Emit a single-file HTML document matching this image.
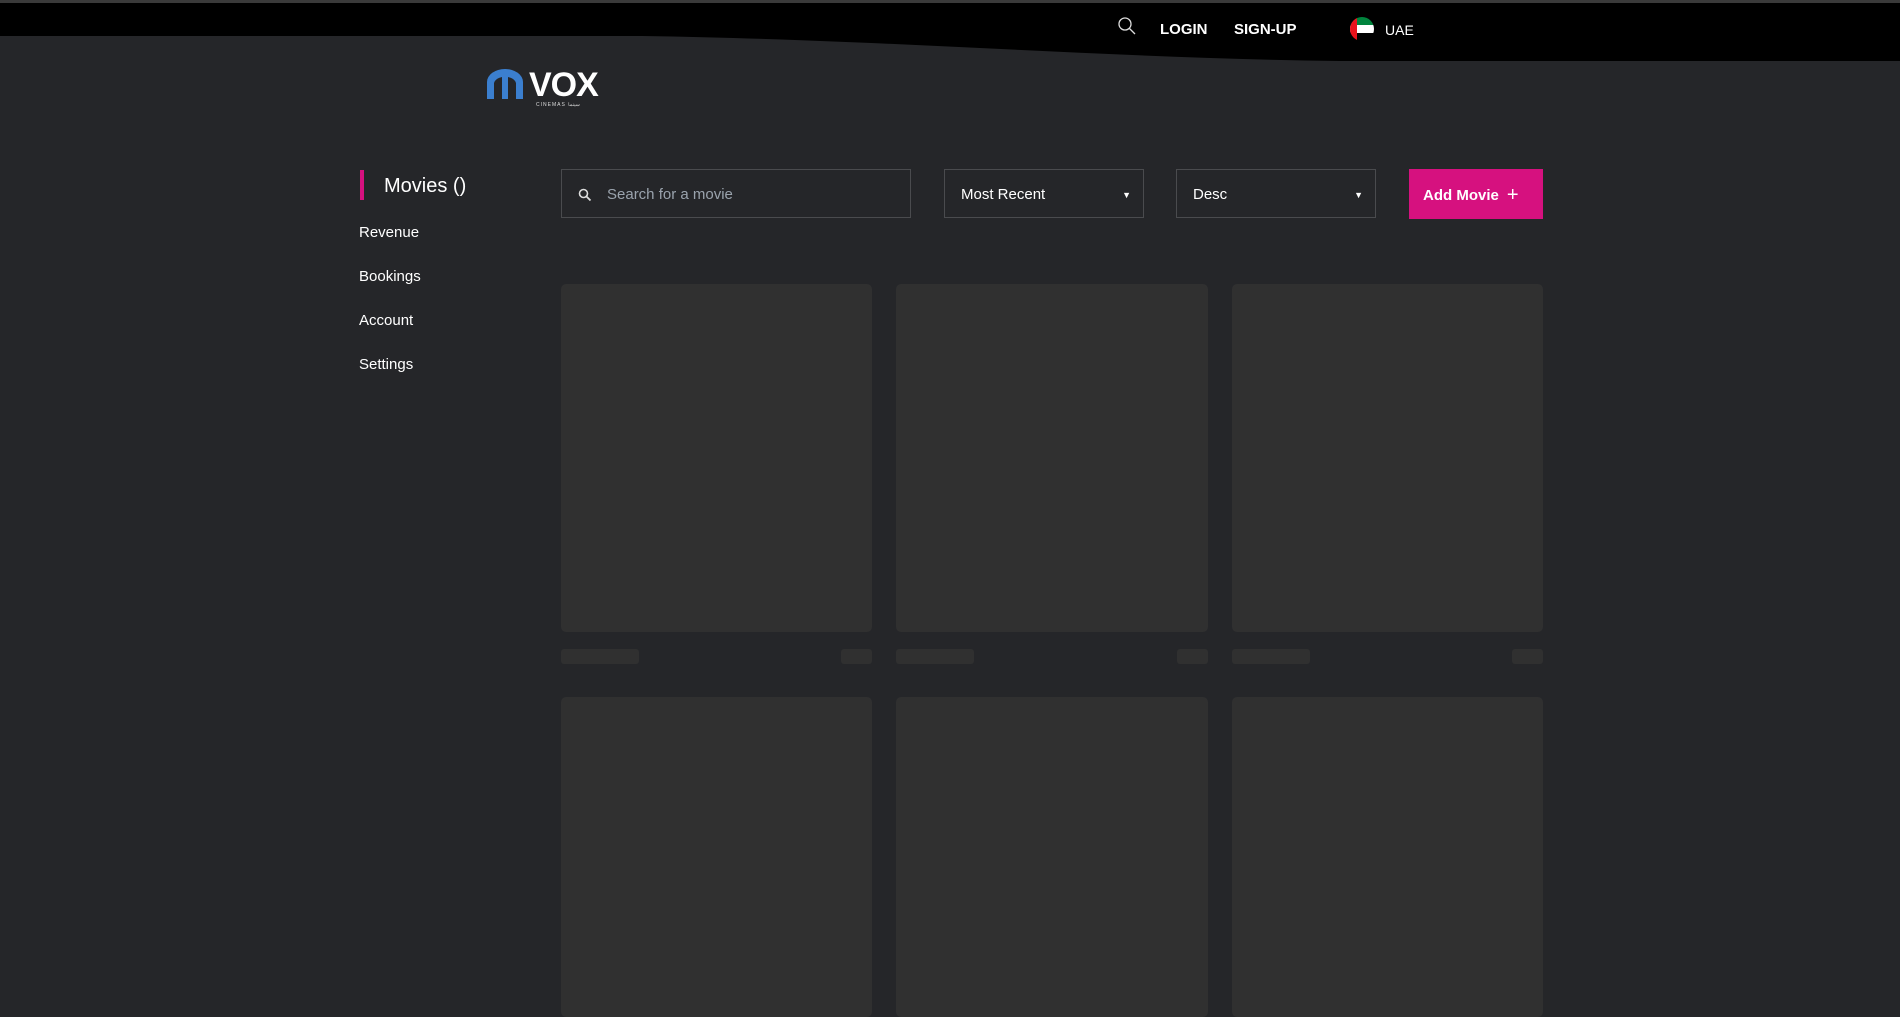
<!DOCTYPE html>
<html><head><meta charset="utf-8"><style>
*{margin:0;padding:0;box-sizing:border-box}
body{width:1900px;height:994px;overflow:hidden;background:#252629;font-family:"Liberation Sans",sans-serif;color:#fff;position:relative}
.a{position:absolute}
.nav{font-size:15px;color:#fff}
.card{position:absolute;background:#303030;border-radius:5px}
.bar{position:absolute;background:#303030;border-radius:3px;height:15px}
.box{position:absolute;border:1px solid #4a4b4e;height:49px;top:169px;font-size:15px;display:flex;align-items:center;padding-top:2px}
</style></head><body>
<svg class="a" style="left:0;top:0" width="1900" height="62">
<rect width="1900" height="3" fill="#3a3a3a"/>
<path d="M0 3 H1900 V61 H1340 C1100 58 900 40 642 36 H0 Z" fill="#000"/>
</svg>
<svg class="a" style="left:1117px;top:16px" width="20" height="20" viewBox="0 0 20 20"><circle cx="8" cy="8" r="6" fill="none" stroke="#ddd" stroke-width="1.3"/><path d="M12.5 12.5 L18 18" stroke="#ddd" stroke-width="1.3"/></svg>
<div class="a" style="left:1160px;top:21px;font-weight:bold;font-size:15px">LOGIN</div>
<div class="a" style="left:1234px;top:21px;font-weight:bold;font-size:15px">SIGN-UP</div>
<svg class="a" style="left:1350px;top:17px" width="24" height="24" viewBox="0 0 24 24"><clipPath id="c"><circle cx="12" cy="12" r="12"/></clipPath><g clip-path="url(#c)"><rect width="24" height="8" fill="#00843d"/><rect y="8" width="24" height="8" fill="#fff"/><rect y="16" width="24" height="8" fill="#000"/><rect width="7" height="24" fill="#e8121b"/></g></svg>
<div class="a" style="left:1385px;top:22px;font-size:14px">UAE</div>
<svg class="a" style="left:486px;top:68px" width="38" height="31" viewBox="0 0 38 31"><path d="M1 31 V14 A18 13 0 0 1 37 14 V31 H30 V15 A11 8 0 0 0 22 9 V31 H16 V9 A11 8 0 0 0 8 15 V31 Z" fill="#3b7fcf"/></svg>
<div class="a" style="left:529px;top:66px;font-size:34px;font-weight:900;letter-spacing:-1px">VOX</div>
<div class="a" style="left:536px;top:102px;font-size:5px;letter-spacing:1px;color:#ddd">CINEMAS سينما</div>
<div class="a" style="left:360px;top:170px;width:4px;height:30px;background:#d6117f"></div>
<div class="a" style="left:384px;top:175px;font-size:20px">Movies ()</div>
<div class="a nav" style="left:359px;top:224px">Revenue</div>
<div class="a nav" style="left:359px;top:268px">Bookings</div>
<div class="a nav" style="left:359px;top:312px">Account</div>
<div class="a nav" style="left:359px;top:356px">Settings</div>
<div class="box" style="left:561px;width:350px;color:#9aa3ad;padding-left:16px"><svg width="14" height="14" viewBox="0 0 14 14"><circle cx="5.5" cy="5.5" r="4" fill="none" stroke="#ddd" stroke-width="1.6"/><path d="M8.5 8.5L12.5 12.5" stroke="#ddd" stroke-width="1.8"/></svg><span style="margin-left:15px;font-size:15px">Search for a movie</span></div>
<div class="box" style="left:944px;width:200px;padding-left:16px">Most Recent<span style="position:absolute;right:12px;font-size:9px">▼</span></div>
<div class="box" style="left:1176px;width:200px;padding-left:16px">Desc<span style="position:absolute;right:12px;font-size:9px">▼</span></div>
<div class="a" style="left:1409px;top:169px;width:134px;height:50px;background:#d6117f;font-weight:bold;font-size:15px;display:flex;align-items:center;padding-left:14px;padding-top:2px">Add Movie <span style="font-weight:normal;font-size:20px;margin-left:8px">+</span></div>
<div class="card" style="left:561px;top:284px;width:311px;height:348px"></div>
<div class="card" style="left:896px;top:284px;width:312px;height:348px"></div>
<div class="card" style="left:1232px;top:284px;width:311px;height:348px"></div>
<div class="bar" style="left:561px;top:649px;width:78px"></div><div class="bar" style="left:841px;top:649px;width:31px"></div>
<div class="bar" style="left:896px;top:649px;width:78px"></div><div class="bar" style="left:1177px;top:649px;width:31px"></div>
<div class="bar" style="left:1232px;top:649px;width:78px"></div><div class="bar" style="left:1512px;top:649px;width:31px"></div>
<div class="card" style="left:561px;top:697px;width:311px;height:320px"></div>
<div class="card" style="left:896px;top:697px;width:312px;height:320px"></div>
<div class="card" style="left:1232px;top:697px;width:311px;height:320px"></div>
</body></html>
